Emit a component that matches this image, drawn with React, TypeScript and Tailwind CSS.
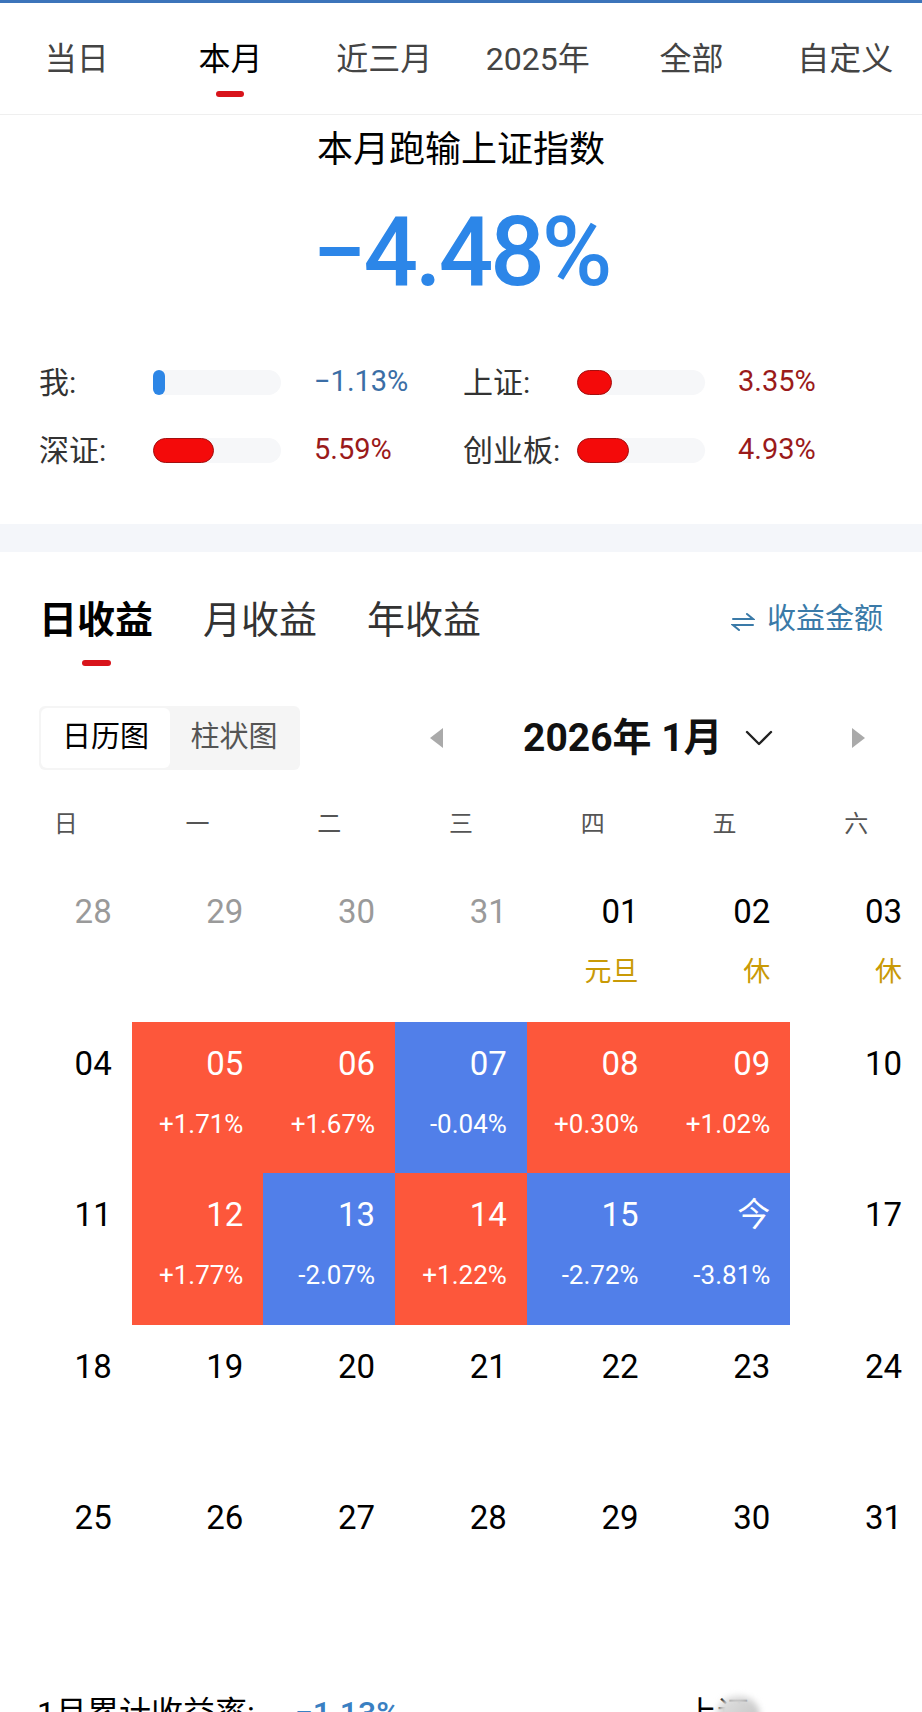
import React from 'react'

type Cell = {
    day: string
    tone?: 'red' | 'blue' | 'muted'
    pct?: string
    note?: string
}

const periodTabs = ['当日', '本月', '近三月', '2025年', '全部', '自定义']
const weekDays = ['日', '一', '二', '三', '四', '五', '六']

const compare = [
    { label: '我:', width: 12, color: 'blue', value: '−1.13%' },
    { label: '上证:', width: 35, color: 'red', value: '3.35%' },
    { label: '深证:', width: 61, color: 'red', value: '5.59%' },
    { label: '创业板:', width: 52, color: 'red', value: '4.93%' },
]

const weeks: Cell[][] = [
    [
        { day: '28', tone: 'muted' },
        { day: '29', tone: 'muted' },
        { day: '30', tone: 'muted' },
        { day: '31', tone: 'muted' },
        { day: '01', note: '元旦' },
        { day: '02', note: '休' },
        { day: '03', note: '休' },
    ],
    [
        { day: '04' },
        { day: '05', tone: 'red', pct: '+1.71%' },
        { day: '06', tone: 'red', pct: '+1.67%' },
        { day: '07', tone: 'blue', pct: '-0.04%' },
        { day: '08', tone: 'red', pct: '+0.30%' },
        { day: '09', tone: 'red', pct: '+1.02%' },
        { day: '10' },
    ],
    [
        { day: '11' },
        { day: '12', tone: 'red', pct: '+1.77%' },
        { day: '13', tone: 'blue', pct: '-2.07%' },
        { day: '14', tone: 'red', pct: '+1.22%' },
        { day: '15', tone: 'blue', pct: '-2.72%' },
        { day: '今', tone: 'blue', pct: '-3.81%' },
        { day: '17' },
    ],
    ['18', '19', '20', '21', '22', '23', '24'].map((day) => ({ day })),
    ['25', '26', '27', '28', '29', '30', '31'].map((day) => ({ day })),
]

const cellBg = (tone?: Cell['tone']) => {
    if (tone === 'red') return 'bg-[#fd573b] text-white'
    if (tone === 'blue') return 'bg-[#517fe9] text-white'
    if (tone === 'muted') return 'text-[#9a9a9a]'
    return 'text-black'
}

const App = () => {
    return (
        <div className='w-[922px] h-[1712px] overflow-hidden bg-white font-[Roboto,"Noto_Sans_CJK_SC",sans-serif]'>
            <div className="h-[3px] bg-[#3c74ba]" />

            {/* period tabs */}
            <div className="grid grid-cols-6 h-[112px] border-b border-[#efefef]">
                {periodTabs.map((tab) => (
                    <div key={tab} className="flex flex-col items-center pt-[38px]">
                        <span className={`text-[32px] leading-[36px] ${tab === '本月' ? 'text-black' : 'text-[#444]'}`}>
                            {tab}
                        </span>
                        {tab === '本月' && <div className="mt-[14px] w-[28px] h-[6px] rounded-full bg-[#d8141b]" />}
                    </div>
                ))}
            </div>

            {/* summary */}
            <div className="flex flex-col items-center">
                <h2 className="mt-[14px] text-[36px] leading-[42px] text-black">本月跑输上证指数</h2>
                <div className="mt-[31px] text-[96px] leading-[100px] font-medium tracking-[-3px] text-[#2c86e8]">
                    −4.48%
                </div>
            </div>

            <div className="grid grid-cols-[424px_1fr] gap-y-[28px] pl-[39px] mt-[60px]">
                {compare.map((item) => (
                    <div key={item.label} className="flex items-center h-[40px]">
                        <span className="w-[114px] text-[30px] text-[#333]">{item.label}</span>
                        <div className="w-[128px] h-[25px] rounded-full bg-[#f6f7f9]">
                            <div
                                className={`h-full rounded-full ${item.color === 'blue' ? 'bg-[#2d86e6]' : 'bg-[#f40a0a] border border-[#a30f0f]'}`}
                                style={{ width: item.width }}
                            />
                        </div>
                        <span className={`ml-[33px] text-[29px] ${item.color === 'blue' ? 'text-[#3b6ea6]' : 'text-[#9a1a1a]'}`}>
                            {item.value}
                        </span>
                    </div>
                ))}
            </div>

            <div className="mt-[54px] h-[28px] bg-[#f4f6fa]" />

            {/* income tabs */}
            <div className="flex items-start px-[39px] pt-[46px]">
                <div className="flex flex-col items-center">
                    <span className="text-[38px] leading-[44px] font-bold text-black">日收益</span>
                    <div className="mt-[18px] w-[29px] h-[6px] rounded-full bg-[#d8141b]" />
                </div>
                <span className="ml-[50px] text-[38px] leading-[44px] text-[#333]">月收益</span>
                <span className="ml-[50px] text-[38px] leading-[44px] text-[#333]">年收益</span>
                <div className="ml-auto flex items-center h-[44px] gap-[12px] text-[29px] text-[#3a7aa8]">
                    <svg className="mt-[4px]" width="24" height="20" viewBox="0 0 24 20" fill="none" stroke="#3a7aa8" strokeWidth="2" strokeLinecap="round">
                        <path d="M2 7h20l-6-5" />
                        <path d="M22 13H2l6 5" />
                    </svg>
                    <span>收益金额</span>
                </div>
            </div>

            {/* view toggle + month */}
            <div className="flex items-center px-[39px] mt-[40px]">
                <div className="flex w-[261px] h-[64px] p-[2px] rounded-md bg-[#f5f5f5]">
                    <div className="w-[129px] flex items-center justify-center rounded-md bg-white text-[29px] text-black">日历图</div>
                    <div className="flex-1 flex items-center justify-center text-[29px] text-[#555]">柱状图</div>
                </div>
                <div className="ml-[130px] w-0 h-0 border-y-[10px] border-y-transparent border-r-[13px] border-r-[#aaa]" />
                <span className="ml-[80px] text-[39px] font-bold text-[#111]">2026年 1月</span>
                <svg className="ml-[21px]" width="30" height="20" viewBox="0 0 30 20" fill="none" stroke="#222" strokeWidth="2.4" strokeLinecap="round" strokeLinejoin="round">
                    <path d="M3 4l12 12L27 4" />
                </svg>
                <div className="ml-[78px] w-0 h-0 border-y-[10px] border-y-transparent border-l-[13px] border-l-[#aaa]" />
            </div>

            {/* calendar */}
            <div className="grid grid-cols-7 mt-[34px] h-[40px] items-center">
                {weekDays.map((d) => (
                    <span key={d} className="text-center text-[24px] text-[#555]">{d}</span>
                ))}
            </div>

            <div className="mt-[26px]">
                {weeks.map((week, i) => (
                    <div key={i} className="grid grid-cols-7 h-[151.5px]">
                        {week.map((cell, j) => (
                            <div key={j} className={`flex flex-col items-end pr-[20px] pt-[22px] ${cellBg(cell.tone)}`}>
                                <span className="text-[33px] leading-[40px]">{cell.day}</span>
                                {cell.pct && <span className="mt-[24px] text-[26px] leading-[32px]">{cell.pct}</span>}
                                {cell.note && <span className="mt-[24px] text-[27px] leading-[32px] text-[#c99a06]">{cell.note}</span>}
                            </div>
                        ))}
                    </div>
                ))}
            </div>

            {/* footer, cut off by the window */}
            <div className="relative flex items-start pl-[37px] mt-[66px] text-[32px] leading-[38px]">
                <div className="w-[648px] flex">
                    <span className="text-black">1月累计收益率:</span>
                    <span className="ml-[40px] font-medium text-[#3a80c2]">−1.13%</span>
                </div>
                <span className="text-black">上证</span>
                <div className="absolute left-[716px] top-[2px] w-[44px] h-[40px] rounded-full bg-gradient-to-br from-[#e4e4e4] to-[#bdbdbd] blur-[3px]" />
            </div>
        </div>
    )
}

export default App
